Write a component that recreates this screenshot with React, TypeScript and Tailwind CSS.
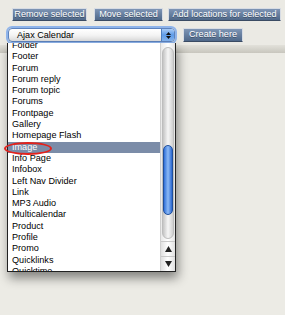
import React from 'react';

const items = [
    'Folder',
    'Footer',
    'Forum',
    'Forum reply',
    'Forum topic',
    'Forums',
    'Frontpage',
    'Gallery',
    'Homepage Flash',
    'Image',
    'Info Page',
    'Infobox',
    'Left Nav Divider',
    'Link',
    'MP3 Audio',
    'Multicalendar',
    'Product',
    'Profile',
    'Promo',
    'Quicklinks',
    'Quicktime',
];

function ToolButton({ label, w }: { label: string; w: string }) {
    return (
        <button
            className={`${w} h-[13px] flex items-center justify-center border border-[#d7dce4] border-b-[#3a4b63] bg-gradient-to-b from-[#7e95b5] to-[#4f6889] text-white text-[9.1px] leading-none [text-shadow:0_1px_0_rgba(0,0,0,0.35)]`}
        >
            {label}
        </button>
    );
}

export default function App() {
    return (
        <div className="relative w-[285px] h-[315px] overflow-hidden bg-[#ecebe5] font-['Liberation_Sans',Arial,sans-serif]">
            {/* toolbar */}
            <div className="h-[45px] pt-[8px] bg-[#ebeae4]">
                <div className="flex h-[13px] pl-[12px]">
                    <ToolButton label="Remove selected" w="w-[75px]" />
                    <div className="ml-[7px]">
                        <ToolButton label="Move selected" w="w-[69px]" />
                    </div>
                    <div className="ml-[5px]">
                        <ToolButton label="Add locations for selected" w="w-[113px]" />
                    </div>
                </div>
                <div className="flex mt-[7px] h-[14px] pl-[8px]">
                    <div className="w-[167px] h-[14px] flex rounded-[4px] border border-[#5d83bd] ring-2 ring-[#8fb4ea] bg-gradient-to-b from-white via-[#f4f4f4] to-[#dcdcdc] overflow-hidden">
                        <span className="flex-1 pl-[8px] text-[9.1px] leading-[12px] text-black">Ajax Calendar</span>
                        <span className="w-[13px] flex flex-col items-center justify-center gap-[1px] bg-gradient-to-b from-[#a9cbf5] via-[#5d9be8] to-[#86b6f0] border-l border-[#4f7fc0]">
                            <svg width="5" height="3" viewBox="0 0 5 3"><path d="M2.5 0L5 3H0z" fill="#111" /></svg>
                            <svg width="5" height="3" viewBox="0 0 5 3"><path d="M0 0h5L2.5 3z" fill="#111" /></svg>
                        </span>
                    </div>
                    <div className="ml-[8px]">
                        <ToolButton label="Create here" w="w-[60px] !h-[14px]" />
                    </div>
                </div>
            </div>
            <div className="h-[8px] bg-gradient-to-b from-[#e2e1da] to-[#c8c6be]" />

            {/* open dropdown list */}
            <div className="absolute left-[7px] top-[43px] w-[169px] h-[229px] flex bg-white border border-t-0 border-[#222] shadow-[2px_6px_10px_rgba(0,0,0,0.45)]">
                <div className="flex-1 overflow-hidden">
                    <div className="mt-[-3px]">
                        {items.map((it) => (
                            <div
                                key={it}
                                className={`h-[11.3px] leading-[11.3px] pl-[4px] text-[9.1px] whitespace-nowrap ${
                                    it === 'Image' ? 'bg-[#7b8ca8] text-white' : 'text-black'
                                }`}
                            >
                                {it}
                            </div>
                        ))}
                    </div>
                </div>
                {/* scrollbar */}
                <div className="w-[15px] flex flex-col border-l border-[#cfcfcf] bg-gradient-to-r from-[#e9e9e9] via-white to-[#e4e4e4]">
                    <div className="flex-1 mx-[1px] mt-[4px] mb-[2px] rounded-full bg-gradient-to-r from-[#c4c4c4] via-[#f6f6f6] to-[#cfcfcf] border border-[#bdbdbd]">
                        <div className="mt-[97px] h-[70px] rounded-full border border-[#1f4f9c] bg-gradient-to-r from-[#2f6fd8] via-[#8dbaf5] to-[#2a66cf]" />
                    </div>
                    <div className="h-[15px] flex items-center justify-center border-t border-[#c9c9c9] bg-gradient-to-r from-[#e0e0e0] via-white to-[#e0e0e0]">
                        <svg width="7" height="6" viewBox="0 0 7 6"><path d="M3.5 0L7 6H0z" fill="#222" /></svg>
                    </div>
                    <div className="h-[15px] flex items-center justify-center border-t border-[#c9c9c9] bg-gradient-to-r from-[#e0e0e0] via-white to-[#e0e0e0]">
                        <svg width="7" height="6" viewBox="0 0 7 6"><path d="M0 0h7L3.5 6z" fill="#222" /></svg>
                    </div>
                </div>
            </div>

            {/* red annotation ellipse */}
            <div className="absolute left-[4px] top-[142px] w-[48px] h-[13px] rounded-[50%] border-2 border-[#e3221c]" />
        </div>
    );
}
